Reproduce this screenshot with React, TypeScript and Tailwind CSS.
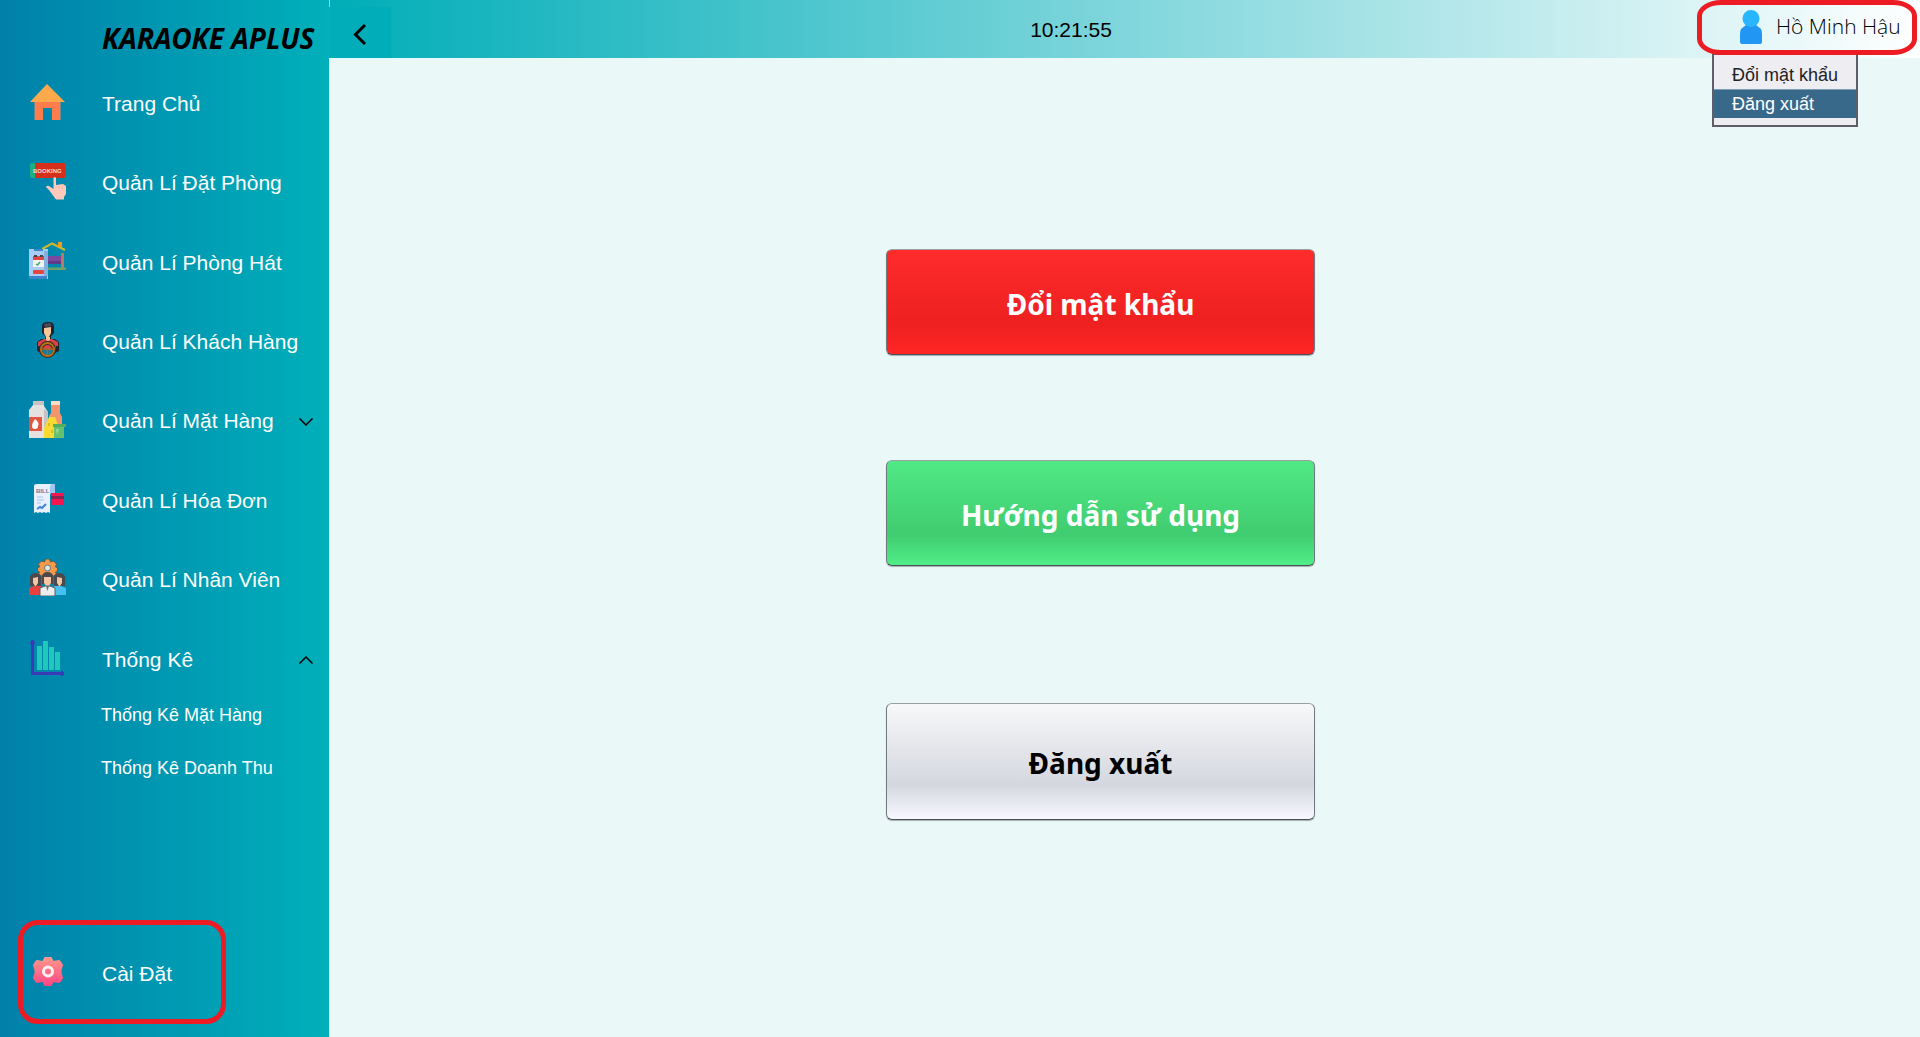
import type { ReactNode } from "react";

const HomeIcon = () => (
  <svg viewBox="0 0 37 37" className="size-[37px]" aria-hidden="true">
    <path d="M6 18H31V37H23V25H14V37H6Z" fill="#ff7d4d" />
    <path d="M5 18H6V37H5ZM31 18H32V37H31Z" fill="#6d8a94" />
    <path d="M18 1L36 19H1Z" fill="#ffa94d" />
  </svg>
);

const BookingIcon = () => (
  <svg viewBox="0 0 37 37" className="size-[37px]" aria-hidden="true">
    <rect x="1" y="0" width="10" height="15" rx="2" fill="#1fae84" />
    <rect x="6" y="0" width="30" height="15" rx="1" fill="#d6301a" />
    <text x="4" y="10" fontSize="6" fontFamily="Liberation Sans" fontWeight="700" fill="#f4d9df">BOOKING</text>
    <path d="M24.500 14.500q1-1 2.500 0V22l7-1 3 2v8l-2 3v2.500h-8L20 27l-3-3q1-2 3-1l4.500 3Z" fill="#ffc9bb" />
    <path d="M30 22v4M33.500 22v4" stroke="#f3b5a8" strokeWidth="1" />
  </svg>
);

const RoomIcon = () => (
  <svg viewBox="0 0 37 37" className="size-[37px]" aria-hidden="true">
    <path d="M13 7L23 1.500L36 8" fill="none" stroke="#c9b92d" strokeWidth="2" />
    <rect x="29" y="0" width="4" height="5" fill="#f99a1c" />
    <rect x="18" y="14" width="15" height="8" fill="#7b4a9e" />
    <rect x="18" y="19" width="14" height="3" fill="#5f3a87" />
    <rect x="32" y="11" width="3" height="15" fill="#b77b64" />
    <rect x="18" y="25.500" width="19" height="2.500" fill="#6ca268" />
    <rect x="0" y="7" width="19" height="30" fill="#a8cdf5" />
    <rect x="15" y="9" width="4" height="25" fill="#84b0dd" />
    <path d="M5 7h9v2H5ZM0 34h18v3H0Z" fill="#3d84cf" />
    <rect x="4" y="14" width="11" height="11" fill="#f2f4f4" />
    <rect x="4" y="14" width="11" height="4" fill="#e2463f" />
    <path d="M5 13h3v2H5ZM11 13h3v2h-3Z" fill="#38465a" />
    <path d="M7 22l1.500 1L11 20" fill="none" stroke="#43a96a" strokeWidth="1.500" />
    <rect x="4" y="28" width="11" height="4" rx="1" fill="#e2463f" />
  </svg>
);

const CustomerIcon = () => (
  <svg viewBox="0 0 37 37" className="size-[37px]" aria-hidden="true">
    <path d="M13 12V5q0-4 6-4t6 4v7l-3 3v3h-6v-3Z" fill="#24222d" />
    <path d="M15 7l7-1v6l-2 4h-3l-2-4Z" fill="#f8c89c" />
    <path d="M15 3l6-1 2 3-7 1Z" fill="#4b4d5c" />
    <path d="M8 30V21l4-3h14l4 3v9l-4 2H12Z" fill="#24222d" />
    <path d="M9 21l6-3h8l6 3v5l-3 4H12l-3-4Z" fill="#d8424d" />
    <path d="M17 16h4v3l-2 1-2-1Z" fill="#f8c89c" />
    <path d="M8 25h3v5l-3-1ZM27 25h3v4l-3 1Z" fill="#24222d" />
    <circle cx="18.500" cy="28.500" r="6.500" fill="none" stroke="#3a2a1b" strokeWidth="4" />
    <path d="M13 29h11l-2 5h-7Z" fill="#087fa5" />
    <circle cx="18.500" cy="28.500" r="6.500" fill="none" stroke="#b9721b" strokeWidth="2" />
    <path d="M12 28h13M18.500 28v6" stroke="#a9651c" strokeWidth="1.500" />
  </svg>
);

const GoodsIcon = () => (
  <svg viewBox="0 0 37 37" className="size-[37px]" aria-hidden="true">
    <path d="M4 0h11v5l4 6v26H0V9l4-5Z" fill="#e5e1e0" />
    <path d="M4 0h11v4H4ZM15 8l4 3v26h-4Z" fill="#c8c3c2" />
    <path d="M0 16h13v14H0Z" fill="#e2553e" />
    <path d="M6 18q5 4 3 7a3 3 0 0 1-6 0q0-3 3-7Z" fill="#fff" />
    <path d="M22 0h9v12l2 4v11H20V15l2-3Z" fill="#f2956f" />
    <rect x="22" y="0" width="9" height="4" fill="#f8dcc5" />
    <path d="M20 16h6l3 8v13H15V27Z" fill="#f7db34" />
    <path d="M19 22h2v3h-2ZM22 29h2v3h-2Z" fill="#e0b91d" />
    <path d="M25 25h10v12H25Z" fill="#65c070" />
    <path d="M24 23h13v3H24Z" fill="#53ad5e" />
    <path d="M27 28h3l-2 6Z" fill="#9cdb9c" />
  </svg>
);

const BillIcon = () => (
  <svg viewBox="0 0 37 37" className="size-[37px]" aria-hidden="true">
    <path d="M8 4h18v10h-5V6Z" fill="#9fc5f2" />
    <path d="M5 6q0-2 3-2h15q-2 1-2 3v26l-2-1-2 1-2-1-2 1-2-1-2 1-2-1-2 1Z" fill="#e8f0fd" />
    <text x="7" y="12.500" fontSize="6" fontFamily="Liberation Sans" fontWeight="700" fill="#77799c">BILL</text>
    <path d="M8 17h6M8 20h7M8 23h4" stroke="#b9d1f8" strokeWidth="1.500" />
    <path d="M8 29l3-2 2 1 4-4" fill="none" stroke="#3b84e0" strokeWidth="2" />
    <rect x="22" y="13" width="13" height="12" fill="#f5154f" />
    <rect x="22" y="16" width="13" height="3" fill="#85274f" />
  </svg>
);

const StaffIcon = () => (
  <svg viewBox="0 0 37 37" className="size-[37px]" aria-hidden="true">
    <path d="M16.500 0h4l1 3 3-1 3 3-1 3 2 1v3l-2 1 1 2-3 2-3-1h-6l-3 1-3-2 1-2-2-1V9l2-1-1-3 3-3 3 1Z" fill="#f29a4a" stroke="#6b5a45" strokeWidth="1" />
    <circle cx="18.500" cy="9" r="3" fill="#dfe7e8" stroke="#67777b" strokeWidth="1" />
    <path d="M1 27V18q1-4 5.500-4t5.500 4v9ZM25 27V18q1-4 5.500-4t5.500 4v9Z" fill="#4a494e" />
    <path d="M4 19l5-1v6l-2 3H6l-2-3ZM28 18l5 1v5l-2 3h-1l-2-3Z" fill="#f8c5a1" />
    <path d="M0 36v-7l5-2h7v9Z" fill="#e9403f" />
    <path d="M25 36v-9h7l5 2v7Z" fill="#45c0ef" />
    <path d="M13 25v-8q1-4 5.500-4t5.500 4v8Z" fill="#4a494e" />
    <path d="M15 18h7v6l-2 3h-3l-2-3Z" fill="#f8c5a1" />
    <path d="M11 37v-8l5-2h5l5 2v8Z" fill="#eceeee" stroke="#5b6063" strokeWidth="1" />
    <path d="M17 27h3l-1.500 5Z" fill="#6b7073" />
  </svg>
);

const ChartIcon = () => (
  <svg viewBox="0 0 37 37" className="size-[37px]" aria-hidden="true">
    <path d="M8 7h5v24H8ZM14 2h5v29h-5ZM20 8h5v23h-5ZM26 13h5v18h-5Z" fill="#1fc8ba" />
    <path d="M3.500 1V34.500H35" fill="none" stroke="#3a3ab7" strokeWidth="3" />
    <path d="M1 4h5M33 32v5" stroke="#3a3ab7" strokeWidth="2" />
  </svg>
);

const SettingsIcon = () => (
  <svg viewBox="0 0 37 37" className="size-[37px]" aria-hidden="true">
    <defs>
      <linearGradient id="gear" x1="0" y1="0" x2="0" y2="1">
        <stop offset="0" stopColor="#ff9a8b" />
        <stop offset="1" stopColor="#ff4586" />
      </linearGradient>
    </defs>
    <path d="M16 3h6q1 0 1.500 2l1 2 5-1q1 0 2 1l2 3q1 1 0 3l-1 3v3l1 3q1 2 0 3l-2 3q-1 1-2 1l-5-1-1 2q-.5 2-1.500 2h-6q-1 0-1.500-2l-1-2-5 1q-1 0-2-1l-2-3q-1-1 0-3l1-3v-3l-1-3q-1-2 0-3l2-3q1-1 2-1l5 1 1-2q.5-2 1.500-2Z" fill="url(#gear)" />
    <circle cx="19" cy="17.500" r="4.500" fill="none" stroke="#fff0f2" strokeWidth="3" />
  </svg>
);

const UserIcon = () => (
  <svg viewBox="0 0 22 34" className="h-[34px] w-[22px]" aria-hidden="true">
    <path d="M6 15h10l5 4q1 2 1 5v8q0 2-2 2H2q-2 0-2-2v-8q0-3 1-5Z" fill="#2196f3" />
    <circle cx="11" cy="8.500" r="8.500" fill="#29b6ff" />
  </svg>
);

const Chevron = ({ up }: { up?: boolean }) => (
  <svg viewBox="0 0 14 8" className="mt-1.5 h-2 w-3.5" fill="none" stroke="#000" strokeWidth="1.500" aria-hidden="true">
    <path d={up ? "M0.500 7.500L7 1L13.500 7.500" : "M0.500 0.500L7 7L13.500 0.500"} />
  </svg>
);

const menu: { label: string; icon: ReactNode; arrow?: "up" | "down" }[] = [
  { label: "Trang Chủ", icon: <HomeIcon /> },
  { label: "Quản Lí Đặt Phòng", icon: <BookingIcon /> },
  { label: "Quản Lí Phòng Hát", icon: <RoomIcon /> },
  { label: "Quản Lí Khách Hàng", icon: <CustomerIcon /> },
  { label: "Quản Lí Mặt Hàng", icon: <GoodsIcon />, arrow: "down" },
  { label: "Quản Lí Hóa Đơn", icon: <BillIcon /> },
  { label: "Quản Lí Nhân Viên", icon: <StaffIcon /> },
  { label: "Thống Kê", icon: <ChartIcon />, arrow: "up" },
];

const actionBase =
  "w-[429px] max-w-full rounded-[6px] border border-t-[#9aa0a3] border-x-[#74787f] border-b-[#4c4e58] bg-linear-to-b/srgb pt-[3px] text-center font-['Noto_Sans',sans-serif] text-[28px] font-bold leading-10 shadow-[0_1px_1px_rgba(0,0,0,0.3)]";

export default function App() {
  return (
    <div className="flex min-h-screen bg-[#eaf8f8] font-['Liberation_Sans',sans-serif]">
      <aside className="flex w-[329px] shrink-0 flex-col bg-linear-to-r/srgb from-[#0080aa] to-[#00b0ba]">
        <h1 className="pt-5 pl-[102px] font-['Noto_Sans',sans-serif] text-[28px] leading-9 font-bold whitespace-nowrap text-black italic">
          KARAOKE APLUS
        </h1>
        <nav className="mt-1.5 flex grow flex-col text-white">
          <ul className="grid h-[635px] grid-rows-8">
            {menu.map((m) => (
              <li key={m.label} className="flex">
                <button className="flex w-full items-center pr-4 pl-[29px] text-left text-[21px]">
                  {m.icon}
                  <span className="ml-9 grow pt-1 whitespace-nowrap">{m.label}</span>
                  {m.arrow && <Chevron up={m.arrow === "up"} />}
                </button>
              </li>
            ))}
          </ul>
          <ul className="-mt-2 text-[18px]">
            {["Thống Kê Mặt Hàng", "Thống Kê Doanh Thu"].map((label) => (
              <li key={label}>
                <button className="block h-[53px] w-full pl-[101px] text-left">{label}</button>
              </li>
            ))}
          </ul>
          <button className="mt-auto mb-[13px] ml-[18px] flex h-[104px] w-52 items-center rounded-[20px] border-[5px] border-[#ed1c24] pl-1.5 text-left text-[21px]">
            <SettingsIcon />
            <span className="ml-9 pt-1">Cài Đặt</span>
          </button>
        </nav>
      </aside>

      <div className="flex min-w-0 grow flex-col">
        <header className="flex h-[58px] items-center bg-linear-to-r/srgb from-[#00adb8] to-white">
          <div className="w-[62px]">
            <div className="h-[7px] border-l border-[#8fd5d8]" />
            <button aria-label="Quay lại" className="flex h-[51px] w-full items-center bg-[#00adb9] pt-1 pl-6">
              <svg viewBox="0 0 13 21" className="h-[21px] w-[13px]" fill="none" stroke="#000" strokeWidth="3" aria-hidden="true">
                <path d="M12 1L2.500 10.500L12 20" />
              </svg>
            </button>
          </div>
          <time className="grow pt-0.5 pl-[54px] text-center text-[21px]">10:21:55</time>
          <div className="relative self-start">
            <button className="relative z-10 mr-[3px] flex h-[55px] w-[220px] items-center rounded-[24px/16px] border-[5px] border-[#ed1c24] pb-0.5 pl-[38px] font-['Open_Sans',sans-serif] text-[21px] font-light whitespace-nowrap">
              <UserIcon />
              <span className="ml-3.5">Hồ Minh Hậu</span>
            </button>
            <ul
              role="menu"
              className="absolute top-[53px] left-[15px] w-[146px] border-2 border-[#5f5e68] bg-[#eeedf2] pt-1.5 pb-[7px] text-[18px] leading-7"
            >
              <li role="none">
                <button role="menuitem" className="block h-7 w-full pl-[18px] text-left text-[#222]">Đổi mật khẩu</button>
              </li>
              <li role="none">
                <button role="menuitem" className="block h-[29px] w-full border-t border-[#7a9db5] bg-[#39698a] pl-[18px] text-left text-white">
                  Đăng xuất
                </button>
              </li>
            </ul>
          </div>
        </header>
        <main className="flex flex-col items-center pt-[191px] pr-12">
          <button className={`${actionBase} h-[106px] from-[#ff2c2c] via-[#ee2020] via-70% to-[#ff2525] text-white`}>
            Đổi mật khẩu
          </button>
          <button className={`${actionBase} mt-[105px] h-[106px] from-[#50e986] via-[#40cc70] via-70% to-[#50ee88] text-white`}>
            Hướng dẫn sử dụng
          </button>
          <button className={`${actionBase} mt-[137px] h-[117px] from-[#f7f8f9] via-[#d4d7df] via-70% to-[#f8f9ff] text-black`}>
            Đăng xuất
          </button>
        </main>
      </div>
    </div>
  );
}
